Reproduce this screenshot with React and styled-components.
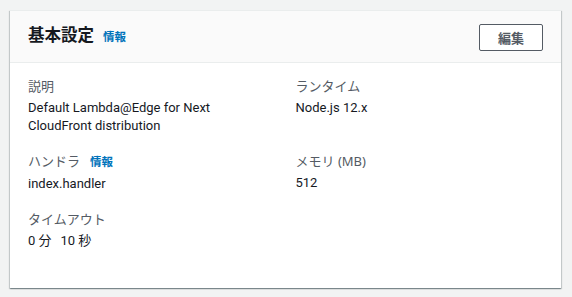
import React from "react";
import styled, { createGlobalStyle } from "styled-components";

const Global = createGlobalStyle`
  html, body { margin: 0; padding: 0; background: #f2f3f3; }
  body { font-family: "Noto Sans", "Noto Sans CJK JP", sans-serif; -webkit-font-smoothing: antialiased; }
`;

const Page = styled.div`
  padding: 10px 11px 9px 10px;
`;

const Card = styled.section`
  width: 551px;
  height: 278px;
  box-sizing: border-box;
  background: #ffffff;
  border-top: 1px solid #eaeded;
  box-shadow: 0 1px 1px 0 rgba(0, 28, 36, 0.3), 1px 1px 1px 0 rgba(0, 28, 36, 0.15),
    -1px 1px 1px 0 rgba(0, 28, 36, 0.15);
  display: flex;
  flex-direction: column;
`;

const Header = styled.header`
  height: 52px;
  box-sizing: border-box;
  background: #fafafa;
  border-bottom: 1px solid #eaeded;
  display: flex;
  align-items: center;
  justify-content: space-between;
  padding: 0 18px;
`;

const TitleWrap = styled.div`
  display: flex;
  align-items: baseline;
  gap: 9px;
  margin-top: -3px;
`;

const Title = styled.h2`
  margin: 0;
  font-size: 16.5px;
  font-weight: 700;
  color: #16191f;
  line-height: 22px;
`;

const InfoLink = styled.a`
  font-size: 11.5px;
  font-weight: 700;
  color: #0073bb;
  text-decoration: none;
`;

const EditButton = styled.button`
  width: 64px;
  height: 27px;
  margin-top: 1px;
  box-sizing: border-box;
  background: #ffffff;
  border: 1px solid #545b64;
  border-radius: 2px;
  color: #545b64;
  font-family: inherit;
  font-size: 13px;
  font-weight: 700;
  padding: 0;
  cursor: pointer;
`;

const Body = styled.div`
  display: grid;
  grid-template-columns: 1fr 1fr;
  column-gap: 20px;
  row-gap: 17px;
  padding: 14px 18px 0 18px;
  align-content: start;
`;

const Field = styled.div`
  display: flex;
  flex-direction: column;
  gap: 4px;
`;

const Label = styled.div`
  display: flex;
  align-items: baseline;
  gap: 10px;
  font-size: 13px;
  line-height: 18px;
  color: #545b64;
`;

const Value = styled.div`
  font-family: Roboto, "Noto Sans CJK JP", sans-serif;
  font-size: 13px;
  line-height: 18px;
  color: #16191f;
`;

const Unit = styled.span`
  margin-left: ${(p) => (p.$first ? "0" : "9px")};
`;

export default function App() {
  return (
    <>
      <Global />
      <Page>
        <Card>
          <Header>
            <TitleWrap>
              <Title>基本設定</Title>
              <InfoLink href="#">情報</InfoLink>
            </TitleWrap>
            <EditButton>編集</EditButton>
          </Header>
          <Body>
            <Field>
              <Label>説明</Label>
              <Value>Default Lambda@Edge for Next CloudFront distribution</Value>
            </Field>
            <Field>
              <Label>ランタイム</Label>
              <Value>Node.js 12.x</Value>
            </Field>
            <Field>
              <Label>
                <span>ハンドラ</span>
                <InfoLink href="#">情報</InfoLink>
              </Label>
              <Value>index.handler</Value>
            </Field>
            <Field>
              <Label>メモリ (MB)</Label>
              <Value>512</Value>
            </Field>
            <Field>
              <Label>タイムアウト</Label>
              <Value>
                <Unit $first>0 分</Unit>
                <Unit>10 秒</Unit>
              </Value>
            </Field>
          </Body>
        </Card>
      </Page>
    </>
  );
}
